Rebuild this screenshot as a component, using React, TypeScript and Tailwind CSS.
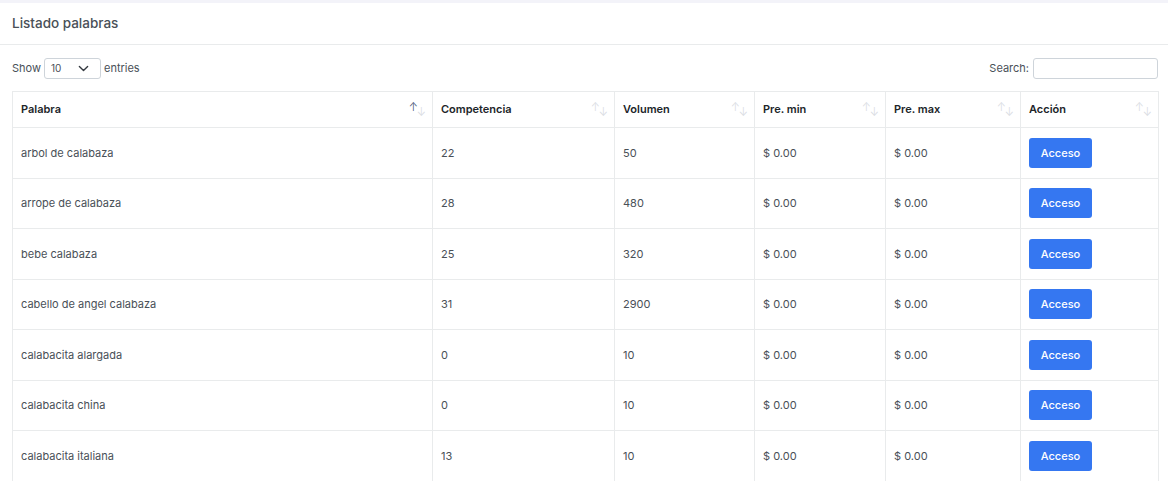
import React from 'react';

type Row = {
  palabra: string;
  competencia: number;
  volumen: number;
  min: string;
  max: string;
};

const rows: Row[] = [
  { palabra: 'arbol de calabaza', competencia: 22, volumen: 50, min: '$ 0.00', max: '$ 0.00' },
  { palabra: 'arrope de calabaza', competencia: 28, volumen: 480, min: '$ 0.00', max: '$ 0.00' },
  { palabra: 'bebe calabaza', competencia: 25, volumen: 320, min: '$ 0.00', max: '$ 0.00' },
  { palabra: 'cabello de angel calabaza', competencia: 31, volumen: 2900, min: '$ 0.00', max: '$ 0.00' },
  { palabra: 'calabacita alargada', competencia: 0, volumen: 10, min: '$ 0.00', max: '$ 0.00' },
  { palabra: 'calabacita china', competencia: 0, volumen: 10, min: '$ 0.00', max: '$ 0.00' },
  { palabra: 'calabacita italiana', competencia: 13, volumen: 10, min: '$ 0.00', max: '$ 0.00' },
];

const columns = [
  { label: 'Palabra', width: 'w-[420px]', active: true },
  { label: 'Competencia', width: 'w-[182px]', active: false },
  { label: 'Volumen', width: 'w-[140px]', active: false },
  { label: 'Pre. min', width: 'w-[131px]', active: false },
  { label: 'Pre. max', width: 'w-[135px]', active: false },
  { label: 'Acción', width: 'w-[138px]', active: false },
];

function SortIcon({ active }: { active: boolean }) {
  return (
    <span className="absolute right-[6px] top-[10px] flex text-[11px] leading-none font-light">
      <span className={active ? 'text-[#3c4a6b]' : 'text-[#d8dbdf]'}>↑</span>
      <span className="mt-[5px] -ml-[1px] text-[#d8dbdf]">↓</span>
    </span>
  );
}

export default function App() {
  return (
    <div className="min-h-screen bg-white text-[#495057]" style={{ fontFamily: 'Inter, "Open Sans", sans-serif' }}>
      <div className="h-[3px] bg-[#f3f3f9]" />

      {/* Header */}
      <div className="flex h-[42px] items-center border-b border-[#e9ebec] px-3">
        <h1 className="text-[13.5px] font-medium text-[#495057]">Listado palabras</h1>
      </div>

      <div className="pl-3 pr-[10px] pt-[13px]">
        {/* Controls */}
        <div className="flex h-[21px] items-center justify-between text-[11px] text-[#495057]">
          <div className="flex items-center gap-[3px]">
            <span>Show</span>
            <div className="flex h-[21px] w-[57px] items-center justify-between rounded-[3px] border border-[#ced4da] px-[6px] text-[10px]">
              <span>10</span>
              <svg width="11" height="11" viewBox="0 0 16 16" fill="none" stroke="#343a40" strokeWidth="2" strokeLinecap="round" strokeLinejoin="round" className="mr-[5px]">
                <path d="M2 5l6 6 6-6" />
              </svg>
            </div>
            <span>entries</span>
          </div>
          <div className="flex items-center gap-[4px]">
            <span>Search:</span>
            <div className="h-[21px] w-[125px] rounded-[3px] border border-[#ced4da]" />
          </div>
        </div>

        {/* Table */}
        <table className="mt-[12px] w-[1146px] table-fixed border-collapse text-[11px]">
          <thead>
            <tr className="h-[36px]">
              {columns.map((c) => (
                <th
                  key={c.label}
                  className={`${c.width} relative border border-[#e9ebec] px-2 text-left font-semibold text-[#212529]`}
                >
                  {c.label}
                  <SortIcon active={c.active} />
                </th>
              ))}
            </tr>
          </thead>
          <tbody>
            {rows.map((r) => (
              <tr key={r.palabra} className="h-[50.5px]">
                <td className="border border-[#e9ebec] px-2">{r.palabra}</td>
                <td className="border border-[#e9ebec] px-2">{r.competencia}</td>
                <td className="border border-[#e9ebec] px-2">{r.volumen}</td>
                <td className="border border-[#e9ebec] px-2">{r.min}</td>
                <td className="border border-[#e9ebec] px-2">{r.max}</td>
                <td className="border border-[#e9ebec] px-2">
                  <button className="h-[30px] w-[63px] rounded-[3px] bg-[#3577f1] text-[11px] font-medium text-white">
                    Acceso
                  </button>
                </td>
              </tr>
            ))}
          </tbody>
        </table>
      </div>
    </div>
  );
}
